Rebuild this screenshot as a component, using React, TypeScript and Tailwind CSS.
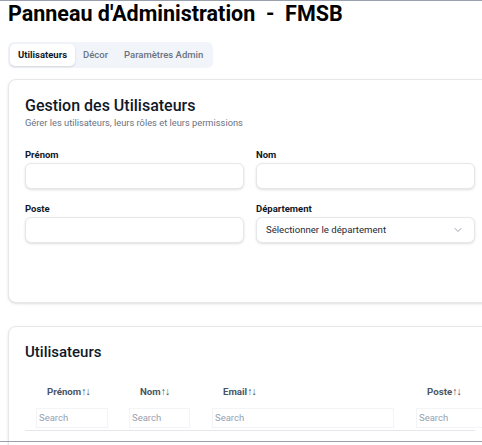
import { ChevronDown } from "lucide-react";

const font = { fontFamily: 'Roboto, "Open Sans", sans-serif' };

function Field({ label, children }: { label: string; children: React.ReactNode }) {
  return (
    <div className="flex flex-col gap-[1px]">
      <label className="text-[9.5px] font-bold leading-[14px] text-gray-900">{label}</label>
      {children}
    </div>
  );
}

function TextInput() {
  return (
    <input className="h-[26px] w-full rounded-md border border-gray-200 bg-white px-2 text-xs shadow-sm outline-none" />
  );
}

const columns = [
  { label: "Prénom", width: "w-[93px]", input: "w-[72px]" },
  { label: "Nom", width: "w-[83px]", input: "w-[61px]" },
  { label: "Email", width: "w-[204px]", input: "w-[182px]" },
  { label: "Poste", width: "w-[100px]", input: "w-[80px]" },
];

export default function App() {
  return (
    <div className="relative h-[445px] w-[482px] overflow-hidden border-t border-gray-400 bg-white" style={font}>
      <div className="px-2">
        <h1 className="text-[21.5px] font-bold leading-[26px] text-black">
          Panneau d'Administration&nbsp;&nbsp;-&nbsp;&nbsp;FMSB
        </h1>

        {/* Tabs */}
        <div className="mt-[15px] inline-flex items-center rounded-md bg-slate-100 p-[2px]">
          <button className="h-[22px] rounded-[5px] bg-white px-2 text-[9.5px] font-bold text-gray-900 shadow-sm">
            Utilisateurs
          </button>
          <button className="h-[22px] px-2 text-[9.5px] font-medium text-gray-500">Décor</button>
          <button className="h-[22px] px-2 text-[9.5px] font-medium text-gray-500">Paramètres Admin</button>
        </div>

        {/* Gestion card */}
        <div className="mt-[11px] w-[484px] rounded-lg border border-gray-200 bg-white px-4 pt-[16px] pb-[59px] shadow-sm">
          <h2 className="text-[16px] font-medium leading-5 text-gray-900">Gestion des Utilisateurs</h2>
          <p className="text-[9.3px] leading-[14px] text-gray-500">
            Gérer les utilisateurs, leurs rôles et leurs permissions
          </p>
          <div className="mt-[18px] grid grid-cols-2 gap-x-3 gap-y-[13px]">
            <Field label="Prénom">
              <TextInput />
            </Field>
            <Field label="Nom">
              <TextInput />
            </Field>
            <Field label="Poste">
              <TextInput />
            </Field>
            <Field label="Département">
              <div className="flex h-[26px] w-full items-center justify-between rounded-md border border-gray-200 bg-white pl-[9px] pr-[10px] shadow-sm">
                <span className="text-[9.6px] text-gray-800">Sélectionner le département</span>
                <ChevronDown className="h-3 w-3 text-gray-400" />
              </div>
            </Field>
          </div>
        </div>

        {/* Utilisateurs card */}
        <div className="mt-[23px] h-[200px] w-[484px] rounded-lg border border-gray-200 bg-white px-4 pt-[15px] shadow-sm">
          <h2 className="text-[15px] font-medium leading-5 text-gray-900">Utilisateurs</h2>
          <div className="mt-[22px] border-b border-gray-200">
            <div className="flex">
              {columns.map((c) => (
                <div key={c.label} className={`${c.width} shrink-0 px-[11px]`}>
                  <div className="px-[11px] text-[9.7px] font-bold leading-4 text-gray-600">
                    {c.label}
                    <span className="text-[10.5px] font-bold tracking-[-1px]">↑↓</span>
                  </div>
                </div>
              ))}
            </div>
            <div className="mt-[4px] flex pb-[2px]">
              {columns.map((c) => (
                <div key={c.label} className={`${c.width} shrink-0 px-[11px]`}>
                  <input
                    placeholder="Search"
                    className={`${c.input} h-[20px] border border-gray-100 px-[2px] text-[9.5px] placeholder:text-gray-400 outline-none`}
                  />
                </div>
              ))}
            </div>
          </div>
        </div>
      </div>
      {/* window frame edge over the cut-off content */}
      <div className="absolute left-0 right-0 top-[440px] border-t border-gray-400" />
    </div>
  );
}
